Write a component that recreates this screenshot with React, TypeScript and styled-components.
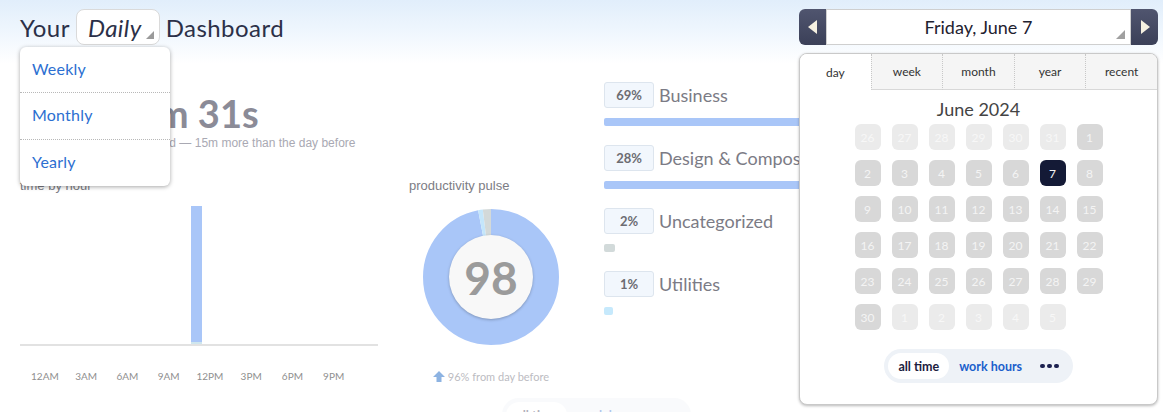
import React from 'react';
import styled, { createGlobalStyle } from 'styled-components';

const GlobalStyles = createGlobalStyle`
  html, body {
    margin: 0;
    padding: 0;
    background: #ffffff;
  }
  body {
    font-family: 'Lato', 'Noto Sans', sans-serif;
  }
  * {
    box-sizing: border-box;
  }
`;

export const Page = styled.div`
  position: relative;
  height: 412px;
  overflow: hidden;
  padding: 9px 5px 0 20px;
  background: linear-gradient(180deg, #e1eefb 0px, #f2f8fe 38px, #ffffff 64px);
`;

export const Header = styled.div`
  display: flex;
  justify-content: space-between;
  align-items: flex-start;
  height: 36px;
`;

export const TitleWrap = styled.div`
  position: relative;
  display: flex;
  align-items: center;
  gap: 6px;
  height: 36px;
  font-size: 24px;
  letter-spacing: 0.45px;
  color: #2b3048;
  z-index: 4;
`;

export const Select = styled.div`
  position: relative;
  height: 36px;
  display: flex;
  align-items: center;
  padding: 0 17px 0 11px;
  border: 1px solid #dadada;
  border-radius: 8px;
  background: #ffffff;
  font-style: italic;

  &::after {
    content: '';
    position: absolute;
    right: 5px;
    bottom: 5px;
    border-left: 8px solid transparent;
    border-bottom: 8px solid #9a9a9a;
  }
`;

export const Menu = styled.div`
  position: absolute;
  top: 38px;
  left: 0;
  width: 150px;
  background: #ffffff;
  border-radius: 6px;
  box-shadow: 0 1px 4px rgba(0, 0, 0, 0.35);
  letter-spacing: 0.2px;
`;

export const MenuItem = styled.div<{ $first?: boolean }>`
  height: ${p => (p.$first ? '45px' : '47px')};
  display: flex;
  align-items: center;
  padding: 0 0 3px 12px;
  font-size: 16px;
  color: #2c6fd1;
  border-top: ${p => (p.$first ? 'none' : '1px dotted #b8b8b8')};
`;

export const DateNav = styled.div`
  position: relative;
  width: 359px;
  height: 36px;
  display: flex;
`;

export const NavButton = styled.div<{ $side: 'left' | 'right' }>`
  width: 27px;
  height: 36px;
  display: flex;
  align-items: center;
  justify-content: center;
  background: linear-gradient(180deg, #50556f, #3b4058);
  border-radius: ${p => (p.$side === 'left' ? '6px 0 0 6px' : '0 6px 6px 0')};
`;

export const DateField = styled.div`
  position: relative;
  flex: 1;
  display: flex;
  align-items: center;
  justify-content: center;
  background: #ffffff;
  border: 1px solid #cfcfcf;
  font-size: 18px;
  color: #1f2230;

  &::after {
    content: '';
    position: absolute;
    right: 5px;
    bottom: 5px;
    border-left: 9px solid transparent;
    border-bottom: 9px solid #a0a0a0;
  }
`;

export const CalendarPanel = styled.div`
  position: absolute;
  top: 44px;
  right: 0;
  width: 359px;
  height: 352px;
  background: #ffffff;
  border: 1px solid #c9c9c9;
  border-radius: 8px;
  box-shadow: 0 1px 3px rgba(0, 0, 0, 0.28);
  overflow: hidden;
  z-index: 5;
  display: flex;
  flex-direction: column;
  align-items: center;
`;

export const Tabs = styled.div`
  width: 100%;
  display: flex;
  height: 36px;
`;

export const Tab = styled.div<{ $active?: boolean }>`
  flex: 1;
  display: flex;
  align-items: center;
  justify-content: center;
  font-size: 12px;
  color: #333;
  background: ${p => (p.$active ? '#ffffff' : '#f5f5f5')};
  border-left: ${p => (p.$active ? 'none' : '1px dotted #c8c8c8')};
  border-bottom: ${p => (p.$active ? 'none' : '1px solid #d8d8d8')};
`;

export const MonthTitle = styled.div`
  margin-top: 7px;
  font-size: 18px;
  color: #444;
  line-height: 24px;
`;

export const DayGrid = styled.div`
  margin-top: 3px;
  display: grid;
  grid-template-columns: repeat(7, 26px);
  grid-auto-rows: 26px;
  column-gap: 11px;
  row-gap: 10px;
`;

export const DayCell = styled.div<{ $kind: 'other' | 'cur' | 'sel' }>`
  border-radius: 6px;
  display: flex;
  align-items: center;
  justify-content: center;
  font-size: 12px;
  color: ${p => (p.$kind === 'other' ? '#f7f7f7' : '#f4f4f4')};
  background: ${p => (p.$kind === 'sel' ? '#141a36' : p.$kind === 'cur' ? '#d8d8d8' : '#ebebeb')};
`;

export const Segmented = styled.div<{ $faded?: boolean }>`
  display: flex;
  align-items: center;
  height: 34px;
  padding: 0 4px;
  border-radius: 17px;
  background: #eef2f7;
  opacity: ${p => (p.$faded ? 0.35 : 1)};
`;

export const SegItem = styled.div<{ $active?: boolean }>`
  height: 26px;
  display: flex;
  align-items: center;
  padding: 0 10px;
  border-radius: 13px;
  font-size: 12.5px;
  font-weight: 700;
  background: ${p => (p.$active ? '#ffffff' : 'transparent')};
  color: ${p => (p.$active ? '#1c2140' : '#1a5fcc')};
`;

export const Dots = styled.div`
  display: flex;
  gap: 2.5px;
  padding: 0 10px 0 8px;
`;

export const Dot = styled.span`
  width: 4.5px;
  height: 4.5px;
  border-radius: 50%;
  background: #1c2150;
`;

export const CalendarFoot = styled.div`
  margin-top: 19px;
`;

export const Content = styled.div`
  display: flex;
  margin-top: 37px;
`;

export const LeftArea = styled.div`
  width: 564px;
`;

export const BigTime = styled.div`
  margin-top: 9px;
  padding-left: 40px;
  font-size: 38px;
  font-weight: 700;
  line-height: 44px;
  color: #8b8b97;
  white-space: nowrap;
`;

export const Subtitle = styled.div`
  padding-left: 94px;
  font-family: 'Liberation Sans', Arial, sans-serif;
  font-size: 12px;
  line-height: 16px;
  color: #a9a9b3;
  white-space: nowrap;
`;

export const ChartRow = styled.div`
  display: flex;
  margin-top: 27px;
`;

export const Chart = styled.div`
  width: 358px;
`;

export const SmallLabel = styled.div`
  font-family: 'Liberation Sans', Arial, sans-serif;
  font-size: 13px;
  line-height: 16px;
  color: #7c7c84;
`;

export const Plot = styled.div`
  height: 152px;
  display: flex;
  align-items: flex-end;
  padding: 0 10px 0 18px;
  border-bottom: 2px solid #e2e2e2;
`;

export const Slot = styled.div`
  flex: 1;
  min-width: 0;
  display: flex;
  justify-content: center;
  align-items: flex-end;
`;

export const HourBar = styled.div`
  width: 11px;
  background: #a9c6f8;
  border-bottom: 2px solid #cfe6ee;
`;

export const HourLabels = styled.div`
  display: flex;
  padding: 0 10px 0 18px;
  margin-top: 24px;
`;

export const HourLabel = styled.div`
  flex: 1;
  min-width: 0;
  display: flex;
  justify-content: center;
  font-size: 10px;
  color: #8f8f8f;
  white-space: nowrap;
`;

export const Pulse = styled.div`
  width: 164px;
  margin-left: 31px;
  display: flex;
  flex-direction: column;
`;

export const DonutWrap = styled.div`
  position: relative;
  margin: 15px auto 0;
  width: 136px;
  height: 136px;
`;

export const DonutCenter = styled.div`
  position: absolute;
  left: 26px;
  top: 26px;
  width: 84px;
  height: 84px;
  border-radius: 50%;
  background: #f8f8f8;
  box-shadow: 0 1px 3px rgba(0, 0, 0, 0.25);
  display: flex;
  align-items: center;
  justify-content: center;
  font-size: 46px;
  font-weight: 700;
  color: #9b9b9b;
`;

export const PulseFoot = styled.div`
  margin-top: 25px;
  display: flex;
  align-items: center;
  justify-content: center;
  gap: 3px;
  font-size: 11px;
  color: #bcbcc2;
`;

export const Categories = styled.div`
  margin-left: 20px;
  width: 520px;
`;

export const CatRow = styled.div`
  margin-bottom: 19px;
`;

export const CatHead = styled.div`
  display: flex;
  align-items: center;
  gap: 5px;
`;

export const PctBox = styled.div`
  width: 50px;
  height: 26px;
  display: flex;
  align-items: center;
  justify-content: center;
  background: #f2f7fd;
  border: 1px solid #dde5ee;
  border-radius: 3px;
  font-size: 13px;
  font-weight: 700;
  color: #6c6c72;
`;

export const CatName = styled.div`
  font-size: 18px;
  color: #7b7b85;
  white-space: nowrap;
`;

export const CatBar = styled.div<{ $color: string }>`
  margin-top: 10px;
  height: 8px;
  border-radius: 2px;
  background: ${p => p.$color};
`;

export const Footer = styled.div`
  display: flex;
  justify-content: center;
  padding-left: 15px;
  margin-top: 15px;
`;

const hours = Array.from({ length: 24 }, (_, i) => (i === 11 ? 138 : 0));
const hourLabels = ['12AM', '3AM', '6AM', '9AM', '12PM', '3PM', '6PM', '9PM'];

const categories = [
  { pct: '69%', name: 'Business', width: 520, color: '#a9c6f8' },
  { pct: '28%', name: 'Design & Composition', width: 212, color: '#a9c6f8' },
  { pct: '2%', name: 'Uncategorized', width: 11, color: '#d2dada' },
  { pct: '1%', name: 'Utilities', width: 9, color: '#c6e9fc' },
];

type Day = { n: number; kind: 'other' | 'cur' | 'sel' };
const days: Day[] = [
  ...[26, 27, 28, 29, 30, 31].map(n => ({ n, kind: 'other' as const })),
  ...Array.from({ length: 30 }, (_, i) => ({ n: i + 1, kind: i + 1 === 7 ? ('sel' as const) : ('cur' as const) })),
  ...[1, 2, 3, 4, 5].map(n => ({ n, kind: 'other' as const })),
];

const Donut = () => {
  const r = 54.5;
  const c = 2 * Math.PI * r;
  const seg = (from: number, len: number, color: string) => (
    <circle
      cx={68}
      cy={68}
      r={r}
      fill="none"
      stroke={color}
      strokeWidth={27}
      strokeDasharray={`${len * c} ${c}`}
      strokeDashoffset={-from * c}
      transform="rotate(-90 68 68)"
    />
  );
  return (
    <svg width={136} height={136} viewBox="0 0 136 136">
      {seg(0, 0.968, '#a9c6f8')}
      {seg(0.968, 0.011, '#c4e6fb')}
      {seg(0.979, 0.021, '#d3d9d9')}
    </svg>
  );
};

const Triangle = ({ dir }: { dir: 'left' | 'right' }) => (
  <svg width={12} height={16} viewBox="0 0 12 16">
    {dir === 'left' ? <polygon points="10,1 10,15 1,8" fill="#f6f1e1" /> : <polygon points="2,1 2,15 11,8" fill="#f6f1e1" />}
  </svg>
);

const RangeToggle = ({ faded }: { faded?: boolean }) => (
  <Segmented $faded={faded}>
    <SegItem $active>all time</SegItem>
    <SegItem>work hours</SegItem>
    <Dots>
      <Dot />
      <Dot />
      <Dot />
    </Dots>
  </Segmented>
);

const App = () => {
  return (
    <React.Fragment>
      <GlobalStyles />
      <Page>
        <Header>
          <TitleWrap>
            <span>Your</span>
            <Select>Daily</Select>
            <span>Dashboard</span>
            <Menu>
              <MenuItem $first>Weekly</MenuItem>
              <MenuItem>Monthly</MenuItem>
              <MenuItem>Yearly</MenuItem>
            </Menu>
          </TitleWrap>
          <DateNav>
            <NavButton $side="left">
              <Triangle dir="left" />
            </NavButton>
            <DateField>Friday, June 7</DateField>
            <NavButton $side="right">
              <Triangle dir="right" />
            </NavButton>
            <CalendarPanel>
              <Tabs>
                <Tab $active>day</Tab>
                <Tab>week</Tab>
                <Tab>month</Tab>
                <Tab>year</Tab>
                <Tab>recent</Tab>
              </Tabs>
              <MonthTitle>June 2024</MonthTitle>
              <DayGrid>
                {days.map((d, i) => (
                  <DayCell key={i} $kind={d.kind}>
                    {d.n}
                  </DayCell>
                ))}
              </DayGrid>
              <CalendarFoot>
                <RangeToggle />
              </CalendarFoot>
            </CalendarPanel>
          </DateNav>
        </Header>

        <Content>
          <LeftArea>
            <BigTime>1h 58m 31s</BigTime>
            <Subtitle>time logged — 15m more than the day before</Subtitle>
            <ChartRow>
              <Chart>
                <SmallLabel>time by hour</SmallLabel>
                <Plot>
                  {hours.map((h, i) => (
                    <Slot key={i}>{h > 0 && <HourBar style={{ height: h }} />}</Slot>
                  ))}
                </Plot>
                <HourLabels>
                  {hours.map((_, i) => (
                    <HourLabel key={i}>{i % 3 === 0 ? hourLabels[i / 3] : ''}</HourLabel>
                  ))}
                </HourLabels>
              </Chart>
              <Pulse>
                <SmallLabel>productivity pulse</SmallLabel>
                <DonutWrap>
                  <Donut />
                  <DonutCenter>98</DonutCenter>
                </DonutWrap>
                <PulseFoot>
                  <svg width={12} height={11} viewBox="0 0 12 11">
                    <polygon points="6,0 12,6 8.5,6 8.5,11 3.5,11 3.5,6 0,6" fill="#8db3e2" />
                  </svg>
                  96% from day before
                </PulseFoot>
              </Pulse>
            </ChartRow>
          </LeftArea>
          <Categories>
            {categories.map(c => (
              <CatRow key={c.name}>
                <CatHead>
                  <PctBox>{c.pct}</PctBox>
                  <CatName>{c.name}</CatName>
                </CatHead>
                <CatBar $color={c.color} style={{ width: c.width }} />
              </CatRow>
            ))}
          </Categories>
        </Content>
        <Footer>
          <RangeToggle faded />
        </Footer>
      </Page>
    </React.Fragment>
  );
};

export default App;
